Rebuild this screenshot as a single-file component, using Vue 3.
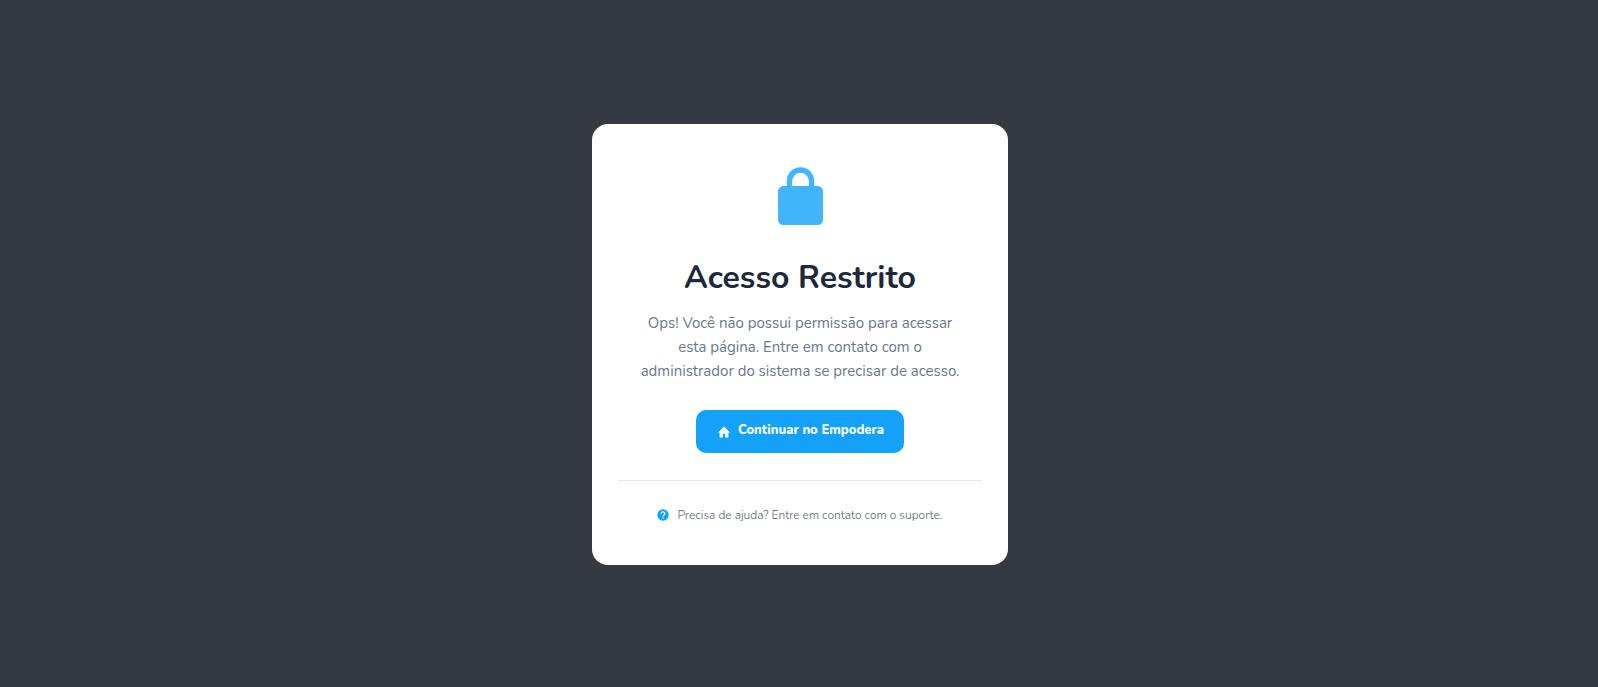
<script setup>
const title = 'Acesso Restrito'
const message =
  'Ops! Você não possui permissão para acessar esta página. Entre em contato com o administrador do sistema se precisar de acesso.'
</script>

<template>
  <main class="page">
    <section class="card" aria-labelledby="title">
      <svg class="lock" viewBox="0 0 45 58" aria-hidden="true">
        <path d="M11.5 24V14a11 11 0 0 1 22 0v10" fill="none" stroke="currentColor" stroke-width="5.4" />
        <rect y="19" width="45" height="39" rx="5.4" fill="currentColor" />
      </svg>
      <h1 id="title" class="title">{{ title }}</h1>
      <p class="message">{{ message }}</p>
      <a class="action" href="#">
        <svg class="home" viewBox="0 0 12 12" aria-hidden="true">
          <path d="M6 .5 0 6.4h1.6v5h3.2V7.8h2.4v3.6h3.2v-5H12z" fill="currentColor" />
        </svg>
        <span>Continuar no Empodera</span>
      </a>
      <footer class="help">
        <svg class="question" viewBox="0 0 12 12" aria-hidden="true">
          <circle cx="6" cy="6" r="5.7" fill="currentColor" />
          <path d="M4.2 4.7a1.8 1.8 0 1 1 2.8 1.4Q6 6.8 6 7.6" fill="none" stroke="#fff" stroke-width="1.2" />
          <rect x="5.4" y="8.4" width="1.2" height="1.2" fill="#fff" />
        </svg>
        <span>Precisa de ajuda? Entre em contato com o suporte.</span>
      </footer>
    </section>
  </main>
</template>

<style>
body {
  margin: 0;
}
</style>

<style scoped>
.page {
  box-sizing: border-box;
  min-height: 100vh;
  padding: 18px 16px 16px 18px;
  display: flex;
  align-items: center;
  justify-content: center;
  background: #353941;
  font-family: Nunito, Lato, "Open Sans", sans-serif;
}

.card {
  box-sizing: border-box;
  width: 100%;
  max-width: 416px;
  padding: 43px 26px 38px;
  display: flex;
  flex-direction: column;
  align-items: center;
  border-radius: 16px;
  background: #fff;
  text-align: center;
}

.lock {
  width: 45px;
  height: 58px;
  color: #42b4fc;
}

.title {
  margin: 32px 0 12px;
  font-size: 32px;
  font-weight: 700;
  line-height: 42px;
  color: #1c293c;
}

.message {
  max-width: 328px;
  margin: 0;
  font-size: 15px;
  line-height: 24px;
  color: #68788c;
}

.action {
  box-sizing: border-box;
  height: 43px;
  margin-top: 27px;
  padding: 0 20px 4px 22px;
  display: flex;
  align-items: center;
  gap: 8px;
  border-radius: 10px;
  background: #14a1fa;
  color: #fff;
  font-size: 13px;
  font-weight: 800;
  line-height: 20px;
  text-decoration: none;
}

.home {
  width: 12px;
  height: 12px;
  margin-top: 4px;
}

.help {
  align-self: stretch;
  margin-top: 27px;
  padding: 23px 0 1px;
  display: flex;
  align-items: center;
  justify-content: center;
  gap: 8px;
  border-top: 1px solid #e2e7ee;
  color: #526276;
  font-size: 12px;
  font-weight: 300;
  line-height: 22px;
}

.question {
  width: 12px;
  height: 12px;
  color: #149ff0;
}
</style>
